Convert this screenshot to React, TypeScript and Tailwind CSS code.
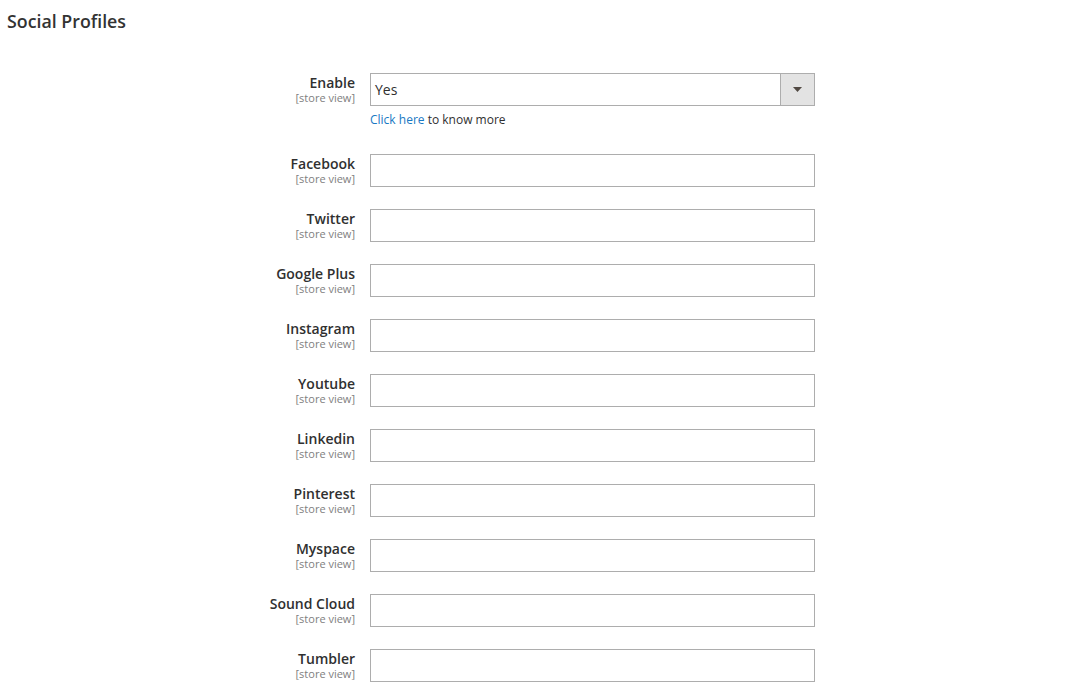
const PROFILES = [
  "Facebook",
  "Twitter",
  "Google Plus",
  "Instagram",
  "Youtube",
  "Linkedin",
  "Pinterest",
  "Myspace",
  "Sound Cloud",
  "Tumbler",
];

function FieldLabel({ text }: { text: string }) {
  return (
    <div className="w-[355px] shrink-0 pt-[1px] text-right">
      <div className="text-[14px] font-semibold leading-[18px] text-[#303030]">{text}</div>
      <div className="-mt-[1px] text-[11px] leading-[13px] text-[#808080]">[store view]</div>
    </div>
  );
}

export default function App() {
  return (
    <div className="min-h-[696px] bg-white font-['Open_Sans',sans-serif] text-[#303030]">
      <h2 className="pl-[7px] pt-[10px] text-[17.8px] font-semibold leading-[22px] text-[#333333]">
        Social Profiles
      </h2>

      <div className="mt-[41px] flex flex-col">
        <div className="flex">
          <FieldLabel text="Enable" />
          <div className="ml-[15px] w-[445px]">
            <div className="flex h-[33px] border border-[#adadad] bg-white">
              <div className="flex-1 pl-[4px] text-[14px] leading-[31px]">Yes</div>
              <div className="flex w-[34px] items-center justify-center border-l border-[#adadad] bg-[#e3e3e3]">
                <svg width="9" height="5" viewBox="0 0 9 5">
                  <path d="M0 0h9L4.5 5z" fill="#514943" />
                </svg>
              </div>
            </div>
            <div className="mt-[6px] text-[12px] leading-[16px]">
              <span className="text-[#1979c3]">Click here</span> to know more
            </div>
          </div>
        </div>

        {PROFILES.map((name, i) => (
          <div key={name} className={`flex ${i === 0 ? "mt-[26px]" : "mt-[22px]"}`}>
            <FieldLabel text={name} />
            <div className="ml-[15px] h-[33px] w-[445px] border border-[#adadad] bg-white" />
          </div>
        ))}
      </div>
    </div>
  );
}
